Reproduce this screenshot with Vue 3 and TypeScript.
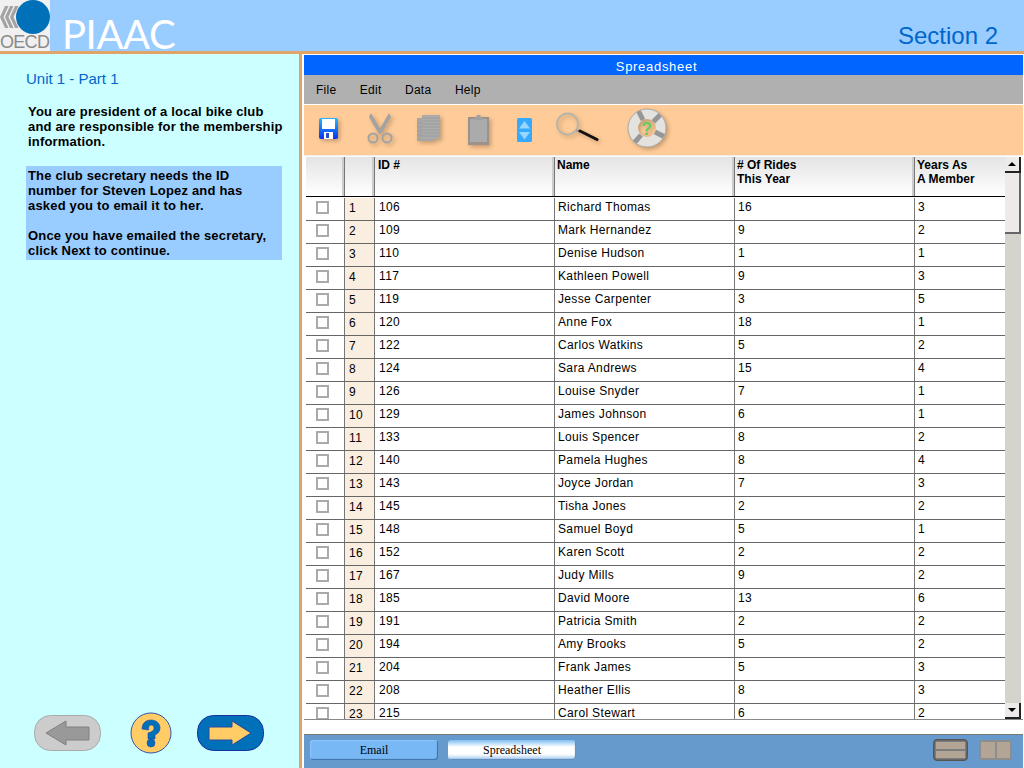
<script setup lang="ts">
const menus = ["File", "Edit", "Data", "Help"];

const members: [string, string, number, number][] = [
  ["106", "Richard Thomas", 16, 3],
  ["109", "Mark Hernandez", 9, 2],
  ["110", "Denise Hudson", 1, 1],
  ["117", "Kathleen Powell", 9, 3],
  ["119", "Jesse Carpenter", 3, 5],
  ["120", "Anne Fox", 18, 1],
  ["122", "Carlos Watkins", 5, 2],
  ["124", "Sara Andrews", 15, 4],
  ["126", "Louise Snyder", 7, 1],
  ["129", "James Johnson", 6, 1],
  ["133", "Louis Spencer", 8, 2],
  ["140", "Pamela Hughes", 8, 4],
  ["143", "Joyce Jordan", 7, 3],
  ["145", "Tisha Jones", 2, 2],
  ["148", "Samuel Boyd", 5, 1],
  ["152", "Karen Scott", 2, 2],
  ["167", "Judy Mills", 9, 2],
  ["185", "David Moore", 13, 6],
  ["191", "Patricia Smith", 2, 2],
  ["194", "Amy Brooks", 5, 2],
  ["204", "Frank James", 5, 3],
  ["208", "Heather Ellis", 8, 3],
  ["215", "Carol Stewart", 6, 2],
];
</script>

<template>
  <div class="page">
    <header class="top">
      <div class="oecd">
        <svg class="oecd-mark" width="50" height="35" viewBox="0 0 50 35">
          <path d="M5 6 L0 17 L5 28 L8.500 28 L3.500 17 L8.500 6 Z" fill="#a3a3a3" />
          <path d="M10 6 L5 17 L10 28 L13.500 28 L8.500 17 L13.500 6 Z" fill="#a3a3a3" />
          <path d="M15 6 L10 17 L15 28 L18.500 28 L13.500 17 L18.500 6 Z" fill="#a3a3a3" />
          <circle cx="33" cy="17" r="17" fill="#0070b8" />
        </svg>
        <span class="oecd-name">OECD</span>
      </div>
      <div class="piaac">PIAAC</div>
      <div class="section">Section 2</div>
    </header>

    <div class="main">
      <aside class="side">
        <div class="unit">Unit 1 - Part 1</div>
        <p class="intro">
          You are president of a local bike club<br />
          and are responsible for the membership<br />
          information.
        </p>
        <div class="task">
          The club secretary needs the ID<br />
          number for Steven Lopez and has<br />
          asked you to email it to her.<br />
          <br />
          Once you have emailed the secretary,<br />
          click Next to continue.
        </div>

        <nav class="nav">
          <svg width="67" height="36" viewBox="0 0 67 36">
            <rect x="0.5" y="0.5" width="66" height="35" rx="16" fill="#cccccc" stroke="#aaaaaa" />
            <path d="M12 18 L32 6 L32 12 L55 12 L55 25 L32 25 L32 30 Z" fill="#999999" stroke="#808080" />
          </svg>
          <svg class="nav-help" width="42" height="42" viewBox="0 0 42 42">
            <circle cx="21" cy="21" r="20" fill="#ffcc66" stroke="#3355aa" />
            <path
              d="M12 17 C12 11 16 8 21 8 C26 8 30 11 30 16 C30 20 27 22 25 23 L25 27 L18 27 L18 21 C21 20 24 19 24 16 C24 14 23 13 21 13 C19 13 18.500 15 18.500 18 Z"
              fill="#0070b8"
              stroke="#2244aa"
              stroke-width="0.6"
            />
            <circle cx="21" cy="31" r="4" fill="#0070b8" stroke="#2244aa" stroke-width="0.6" />
          </svg>
          <svg width="67" height="36" viewBox="0 0 67 36">
            <rect x="0.5" y="0.5" width="66" height="35" rx="16" fill="#0070b8" stroke="#1a2fa0" />
            <path d="M12 12 L35 12 L35 6 L54 18 L35 30 L35 25 L12 25 Z" fill="#ffcc66" stroke="#2a4aa0" />
          </svg>
        </nav>
      </aside>

      <section class="app">
        <div class="title">Spreadsheet</div>
        <div class="menu">
          <span v-for="m in menus" :key="m" class="menu-item">{{ m }}</span>
        </div>

        <div class="toolbar">
          <svg class="tool tool-save" width="26" height="50" viewBox="0 0 26 50">
            <defs>
              <linearGradient id="disk" x1="0" y1="0" x2="0" y2="1">
                <stop offset="0" stop-color="#22bbff" />
                <stop offset="1" stop-color="#0a30ee" />
              </linearGradient>
            </defs>
            <rect x="3" y="13" width="19" height="21" rx="2" fill="url(#disk)" />
            <rect x="6" y="14" width="13" height="10" fill="#ffffff" />
            <rect x="8" y="27" width="9" height="7" fill="#ffffff" />
            <rect x="10" y="28" width="3" height="5" fill="#2a50c0" />
          </svg>
          <svg class="tool tool-cut" width="30" height="50" viewBox="0 0 30 50">
            <path d="M7 8 L18 27 L15 29 L5 12 Z" fill="#a3a3a3" />
            <path d="M25 8 L14 27 L17 29 L27 12 Z" fill="#a3a3a3" />
            <circle cx="9" cy="33" r="4.500" fill="none" stroke="#a3a3a3" stroke-width="2" />
            <circle cx="23" cy="33" r="4.500" fill="none" stroke="#a3a3a3" stroke-width="2" />
          </svg>
          <svg class="tool tool-copy" width="30" height="50" viewBox="0 0 30 50">
            <rect x="3" y="13" width="17" height="23" fill="#a6a6a6" />
            <rect x="8" y="10" width="18" height="24" fill="#ababab" />
            <path
              d="M8 13 H26 M8 16 H26 M8 19 H26 M8 22 H26 M8 25 H26 M8 28 H26 M8 31 H26 M3 18 H8 M3 22 H8 M3 26 H8 M3 30 H8"
              stroke="#999999"
              stroke-width="0.7"
            />
          </svg>
          <svg class="tool tool-paste" width="30" height="50" viewBox="0 0 30 50">
            <rect x="3" y="12" width="21" height="28" fill="#9c9289" />
            <rect x="5" y="14" width="17" height="23" fill="#ababab" />
            <path d="M9 13 L11 12 L12 10 L15 10 L16 12 L18 13 L18 15 L9 15 Z" fill="#a0a0a0" />
          </svg>
          <svg class="tool-flat tool-sort" width="22" height="50" viewBox="0 0 22 50">
            <rect x="3" y="13" width="15" height="24" rx="1.500" fill="#33aaff" />
            <path d="M10.500 16 L16 23.500 H5 Z" fill="#99d6ff" />
            <path d="M10.500 34.500 L16 27 H5 Z" fill="#99d6ff" />
          </svg>
          <svg class="tool tool-find" width="50" height="50" viewBox="0 0 50 50">
            <circle cx="13.500" cy="19" r="10.500" fill="none" stroke="#b5b5ad" stroke-width="1.800" />
            <path d="M22 25 L26 27" stroke="#a0a0a0" stroke-width="2" />
            <path d="M26 26 L43 34.500" stroke="#111111" stroke-width="3" stroke-linecap="round" />
          </svg>
          <svg class="tool tool-assist" width="45" height="50" viewBox="0 0 45 50">
            <circle cx="22" cy="23" r="14" fill="none" stroke="#e4e2de" stroke-width="10" />
            <path
              d="M18 15 L13.500 6 M28.300 16.700 L35.300 9.700 M30 27 L39 31.500 M16 30 L9.700 37.400"
              stroke="#969696"
              stroke-width="5"
            />
            <circle cx="22" cy="23" r="19" fill="none" stroke="#a9a9a9" stroke-width="1" />
            <text x="22" y="29.500" text-anchor="middle" class="assist-mark">?</text>
          </svg>
        </div>

        <div class="sheet">
          <div class="table">
            <div class="row head">
              <div class="hcell"></div>
              <div class="hcell"></div>
              <div class="hcell hcell-id">ID #</div>
              <div class="hcell">Name</div>
              <div class="hcell"># Of Rides<br />This Year</div>
              <div class="hcell">Years As<br />A Member</div>
            </div>
            <div v-for="(m, i) in members" :key="m[0]" class="row line">
              <div class="cell check"><span class="box"></span></div>
              <div class="cell num">{{ i + 1 }}</div>
              <div class="cell cell-id">{{ m[0] }}</div>
              <div class="cell">{{ m[1] }}</div>
              <div class="cell">{{ m[2] }}</div>
              <div class="cell">{{ m[3] }}</div>
            </div>
          </div>
          <div class="scroll">
            <div class="arrow"><span class="tri tri-up"></span></div>
            <div class="thumb"></div>
            <div class="track"></div>
            <div class="arrow"><span class="tri tri-down"></span></div>
          </div>
        </div>

        <div class="spacer"></div>

        <footer class="tabs">
          <button class="tab">Email</button>
          <button class="tab tab-on">Spreadsheet</button>
          <svg class="view" width="35" height="22" viewBox="0 0 35 22">
            <rect x="0.750" y="0.750" width="33.500" height="20.500" rx="3.500" fill="#7c7c7c" stroke="#555555" stroke-width="1.500" />
            <rect x="3" y="3" width="29" height="7" fill="#b3a595" />
            <rect x="3" y="12" width="29" height="7" fill="#b3a595" />
          </svg>
          <svg class="view view-b" width="33" height="20" viewBox="0 0 33 20">
            <rect x="0.500" y="0.500" width="32" height="19" rx="2" fill="#8d8d8d" stroke="#8d8d8d" />
            <rect x="2" y="2" width="14" height="16" fill="#b3a595" />
            <rect x="18" y="2" width="13" height="16" fill="#b3a595" />
          </svg>
        </footer>
      </section>
    </div>
  </div>
</template>

<style>
html,
body {
  margin: 0;
  overflow: hidden;
  background: #fff;
}
</style>

<style scoped>
.page {
  width: 1024px;
  height: 768px;
  display: flex;
  flex-direction: column;
  overflow: hidden;
  font-family: "Liberation Sans", Arial, sans-serif;
}

.top {
  height: 51px;
  flex: none;
  display: flex;
  background: #99ccff;
  border-bottom: 3px solid #e0a468;
}

.oecd {
  width: 50px;
  height: 51px;
  flex: none;
  background: #f0f0f0;
  overflow: hidden;
  position: relative;
}

.oecd-mark {
  display: block;
}

.oecd-name {
  position: absolute;
  left: 0;
  top: 33px;
  font-size: 18px;
  line-height: 18px;
  letter-spacing: -0.700px;
  color: #8a8a8a;
}

.piaac {
  margin-left: 12px;
  font-family: Lato, sans-serif;
  font-weight: 400;
  font-size: 40px;
  line-height: 51px;
  height: 51px;
  padding-top: 9px;
  box-sizing: border-box;
  letter-spacing: -0.400px;
  color: #fff;
}

.section {
  margin-left: auto;
  margin-right: 26px;
  padding-top: 21px;
  font-size: 24px;
  line-height: 30px;
  color: #0066cc;
}

.main {
  flex: 1;
  display: flex;
  min-height: 0;
}

.side {
  width: 299px;
  flex: none;
  box-sizing: content-box;
  display: flex;
  flex-direction: column;
  background: #ccffff;
  border-right: 3px solid #e0a468;
}

.unit {
  margin: 15px 0 0 26px;
  font-size: 15px;
  line-height: 20px;
  color: #0066cc;
}

.intro,
.task {
  font-size: 13px;
  font-weight: 700;
  line-height: 15px;
  letter-spacing: 0.180px;
  color: #000;
}

.intro {
  margin: 15px 0 0 28px;
}

.task {
  width: 256px;
  height: 94px;
  margin: 17px 0 0 26px;
  padding: 2px 0 0 2px;
  box-sizing: border-box;
  background: #99ccff;
}

.nav {
  margin: auto 0 14px 34px;
  display: flex;
  align-items: center;
}

.nav-help {
  margin: 0 25px 0 29px;
}

.app {
  flex: 1;
  min-width: 0;
  margin: 1px 1px 0 2px;
  display: flex;
  flex-direction: column;
  background: #fff;
}

.title {
  height: 20px;
  flex: none;
  padding-right: 14px;
  background: #0066ff;
  color: #fff;
  text-align: center;
  font-size: 13px;
  line-height: 24px;
  letter-spacing: 0.700px;
}

.menu {
  height: 29px;
  flex: none;
  display: flex;
  align-items: center;
  padding-left: 12px;
  gap: 23.500px;
  background: #b0b0b0;
  font-size: 12px;
  letter-spacing: 0.250px;
  color: #000;
  border-bottom: 1px solid #fff;
}

.toolbar {
  height: 50px;
  flex: none;
  display: flex;
  padding-left: 12px;
  background: #ffcc99;
  border-bottom: 1px solid #eee;
}

.tool {
  filter: drop-shadow(2px 2px 2px rgba(120, 90, 60, 0.450));
}

.tool-cut {
  margin-left: 22px;
}

.tool-copy {
  margin-left: 20px;
}

.tool-paste {
  margin-left: 21px;
}

.tool-sort {
  margin-left: 19px;
}

.tool-find {
  margin-left: 18px;
}

.tool-assist {
  margin-left: 21px;
}

.assist-mark {
  font-family: "Liberation Sans", Arial, sans-serif;
  font-size: 18px;
  font-weight: 700;
  fill: #66cc66;
}

.sheet {
  height: 564px;
  flex: none;
  display: flex;
  padding-left: 2px;
  padding-top: 1px;
  box-sizing: border-box;
  border-bottom: 1px solid #888;
}

.table {
  width: 699px;
  flex: none;
  overflow: hidden;
}

.row {
  display: grid;
  grid-template-columns: 38px 30px 180px 180px 180px 91px;
}

.head {
  height: 39px;
  margin-bottom: 1px;
  border-bottom: 1px solid #000;
  background: linear-gradient(#e4e4e4, #ffffff);
}

.hcell {
  border-left: 1px solid #777;
  box-shadow: inset -2px 0 0 #ccc;
  padding: 1px 0 0 2px;
  font-size: 12px;
  font-weight: 700;
  line-height: 14px;
  color: #000;
  min-width: 0;
}

.hcell:first-child {
  border-left: 0;
}

.hcell:last-child {
  box-shadow: none;
}

.hcell-id {
  padding-left: 3px;
}

.line {
  height: 23px;
  box-sizing: border-box;
  border-bottom: 1px solid #666;
}

.cell {
  border-left: 1px solid #777;
  padding: 0 0 0 3px;
  font-size: 12px;
  line-height: 18px;
  letter-spacing: 0.350px;
  color: #000;
  min-width: 0;
}

.cell-id {
  padding-left: 4px;
}

.check {
  border-left: 0;
  padding: 0;
  display: flex;
  justify-content: center;
  padding-top: 3px;
}

.box {
  width: 13px;
  height: 13px;
  box-sizing: border-box;
  margin-left: -5px;
  border: 2px solid #aaa;
  background: #fff;
}

.num {
  background: #faeee0;
  padding: 1px 0 0 4px;
}

.scroll {
  width: 16px;
  flex: none;
  display: flex;
  flex-direction: column;
  background: #d4d4cc;
}

.arrow {
  height: 16px;
  flex: none;
  display: flex;
  align-items: center;
  justify-content: center;
  box-sizing: border-box;
  background: #eeeaea;
  border-right: 2px solid #222;
  border-bottom: 2px solid #222;
}

.tri {
  width: 0;
  height: 0;
  border-left: 4px solid transparent;
  border-right: 4px solid transparent;
}

.tri-up {
  border-bottom: 4px solid #000;
}

.tri-down {
  border-top: 4px solid #000;
}

.thumb {
  height: 61px;
  flex: none;
  box-sizing: border-box;
  background: #eeeaea;
  border-right: 2px solid #666;
  border-bottom: 2px solid #666;
}

.track {
  flex: 1;
}

.spacer {
  height: 15px;
  flex: none;
}

.tabs {
  flex: 1;
  display: flex;
  align-items: flex-start;
  padding: 5px 0 0 6px;
  background: #6699cc;
  border-top: 1px solid #777;
  margin-top: -1px;
}

.tab {
  width: 128px;
  height: 20px;
  margin-right: 10px;
  padding: 0;
  border: 0;
  border-radius: 3px;
  font-family: "Liberation Serif", "Times New Roman", serif;
  font-size: 12px;
  color: #000;
  background: #77b8f5;
  box-shadow: inset -1px -1px 1px #3c6fa8, inset 1px 1px 1px #8cc6ff;
}

.tab-on {
  background: linear-gradient(#7fbdf5, #ffffff 35%, #ffffff 70%, #9cc6ee);
  box-shadow: inset -1px -1px 1px #5a88b8;
}

.view {
  margin-left: auto;
  margin-top: -1px;
  flex: none;
}

.view-b {
  margin: 0 11px 0 11px;
}
</style>
